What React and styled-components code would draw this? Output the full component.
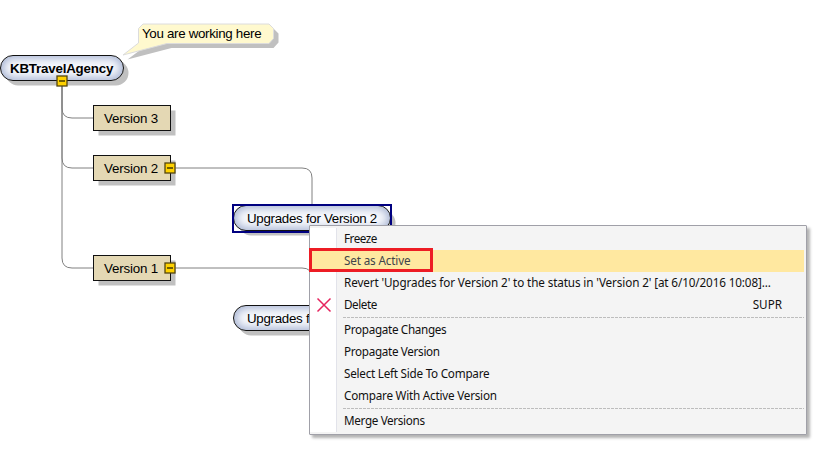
import React from "react";
import styled, { createGlobalStyle } from "styled-components";

const GlobalStyle = createGlobalStyle`
  body { margin: 0; background: #fff; }
  * { box-sizing: border-box; }
`;

const Canvas = styled.main`
  position: relative;
  width: 831px;
  height: 451px;
  overflow: hidden;
  background: #fff;
  font-family: "Liberation Sans", Arial, sans-serif;
  font-size: 13.33px;
  color: #000;
`;

const Connectors = styled.svg`
  position: absolute;
  inset: 0;
`;

const Node = styled.div`
  position: absolute;
  left: ${(p) => p.$x}px;
  top: ${(p) => p.$y}px;
  width: ${(p) => p.$w}px;
  height: 26px;
  display: flex;
  align-items: center;
  padding: 1px 0 0 ${(p) => p.$pad}px;
  white-space: nowrap;
  border: 1px solid #111;
`;

const VersionNode = styled(Node)`
  background: #e4d8b4;
  box-shadow: 5px 5px 0 -0.5px #c0c0c0;
`;

const PillNode = styled(Node)`
  border-radius: 13px;
  background: #f6f8fc;
  box-shadow: 5px 5px 0 -0.5px #c0c0c0, inset 0 0 8px 2px #a3b0d0;
  font-weight: ${(p) => (p.$bold ? 700 : 400)};
`;

const Selection = styled.div`
  position: absolute;
  left: 232px;
  top: 204px;
  width: 160px;
  height: 29px;
  border: 2px solid #000080;
`;

const Label = styled.span`
  max-width: ${(p) => (p.$clip ? `${p.$clip}px` : "none")};
  overflow: ${(p) => (p.$clip ? "hidden" : "visible")};
  letter-spacing: ${(p) => p.$track || 0}px;
  white-space: nowrap;
`;

const ToggleMark = styled.svg`
  position: absolute;
  left: ${(p) => p.$x}px;
  top: ${(p) => p.$y}px;
`;

const CalloutText = styled.div`
  position: absolute;
  left: 142px;
  top: 26px;
  line-height: 16px;
`;

const Menu = styled.ul`
  position: absolute;
  left: 309px;
  top: 225px;
  width: 498px;
  height: 210px;
  margin: 0;
  padding: 2px 2px 2px 0;
  list-style: none;
  border: 1px solid #a0a0a8;
  border-radius: 1px;
  background: linear-gradient(90deg, #fff 26px, #e2e3ea 26px, #e2e3ea 27px, #f4f4f4 27px) no-repeat 0 2px / 100% 204px, #f4f4f4;
  box-shadow: 3px 3px 3px 0 rgba(0, 0, 0, 0.3);
  font-family: "Noto Sans", "Open Sans", sans-serif;
  font-size: 11.7px;
`;

const MenuItem = styled.li`
  display: grid;
  grid-template-columns: 34px 1fr auto;
  align-items: center;
  height: 22px;
  padding: 0 22px 2px 0;
  line-height: 20px;
  color: ${(p) => (p.$active ? "#40444a" : "#111")};
  background: ${(p) => (p.$active ? "#ffe8a0" : "transparent")};
`;

const Divider = styled.li`
  height: 3px;
  margin-left: 33px;
  background: repeating-linear-gradient(90deg, #bdbdbd 0 3px, transparent 3px 4px) no-repeat 0 1px / 100% 1px;
`;

const IconSlot = styled.span`
  display: flex;
  padding: 2px 0 0 6px;
`;

const Highlight = styled.div`
  position: absolute;
  left: 309px;
  top: 248px;
  width: 124px;
  height: 24px;
  border: 3px solid #ed1c24;
`;

function Toggle({ x, y }) {
  return (
    <ToggleMark $x={x} $y={y} width="12" height="12" viewBox="0 0 12 12">
      <rect x="1" y="1" width="10" height="10" fill="#ffd200" stroke="#54460e" strokeWidth="1.3" />
      <path d="M3 6H9" stroke="#3a3000" strokeWidth="1.4" />
    </ToggleMark>
  );
}

function DeleteIcon() {
  return (
    <svg width="16" height="16" viewBox="0 0 16 16">
      <path d="M1.500 1.500L14.500 14.500M14.500 1.500L1.500 14.500" stroke="#e6245e" strokeWidth="1.5" fill="none" />
    </svg>
  );
}

const items = [
  { label: "Freeze", track: -0.5 },
  { label: "Set as Active", track: -0.14, active: true },
  { label: "Revert 'Upgrades for Version 2' to the status in 'Version 2' [at 6/10/2016 10:08]...", track: -0.117 },
  { label: "Delete", track: -0.43, icon: true, shortcut: "SUPR" },
  null,
  { label: "Propagate Changes", track: -0.32 },
  { label: "Propagate Version", track: -0.32 },
  { label: "Select Left Side To Compare", track: -0.24 },
  { label: "Compare With Active Version", track: -0.22 },
  null,
  { label: "Merge Versions", track: -0.34 },
];

export default function App() {
  return (
    <Canvas>
      <GlobalStyle />
      <Connectors width="831" height="451" fill="none">
        <g stroke="#808080" strokeWidth="1">
          <path d="M62 81V108Q62 118 72 118H94" />
          <path d="M62 81V158Q62 168 72 168H94" />
          <path d="M62 81V258Q62 268 72 268H94" />
          <path d="M170 168H302Q312 168 312 178V205" />
          <path d="M170 268H302Q312 268 312 278V305" />
        </g>
        <path transform="translate(4.500 4.500)" fill="#c0c0c0" d="M143 24H269L274 29V38L269 43.500H167L123 55L139 43V28Z" />
        <path fill="#fff9ce" stroke="#dcdcdc" d="M143 24H269L273.500 28.500V38.500L269 43.500H167L123 55L138.500 43V28.500Z" />
      </Connectors>
      <CalloutText><Label $track={-0.31}>You are working here</Label></CalloutText>

      <PillNode $x={0} $y={55} $w={124} $pad={9} $bold><Label $track={-0.2}>KBTravelAgency</Label></PillNode>
      <VersionNode $x={93} $y={105} $w={78} $pad={10}><Label $track={-0.18}>Version 3</Label></VersionNode>
      <VersionNode $x={93} $y={155} $w={78} $pad={10}><Label $track={-0.18}>Version 2</Label></VersionNode>
      <VersionNode $x={93} $y={255} $w={78} $pad={10}><Label $track={-0.18}>Version 1</Label></VersionNode>
      <PillNode $x={233} $y={205} $w={158} $pad={13}><Label $track={-0.29}>Upgrades for Version 2</Label></PillNode>
      <PillNode $x={233} $y={305} $w={158} $pad={13}><Label $track={-0.29} $clip={62}>Upgrades for Version 1</Label></PillNode>
      <Selection />
      <Toggle x={56} y={75} />
      <Toggle x={164} y={162} />
      <Toggle x={164} y={262} />

      <Menu>
        {items.map((item, i) =>
          item ? (
            <MenuItem key={i} $active={item.active}>
              <IconSlot>{item.icon && <DeleteIcon />}</IconSlot>
              <Label $track={item.track}>{item.label}</Label>
              <Label>{item.shortcut}</Label>
            </MenuItem>
          ) : (
            <Divider key={i} />
          )
        )}
      </Menu>
      <Highlight />
    </Canvas>
  );
}
